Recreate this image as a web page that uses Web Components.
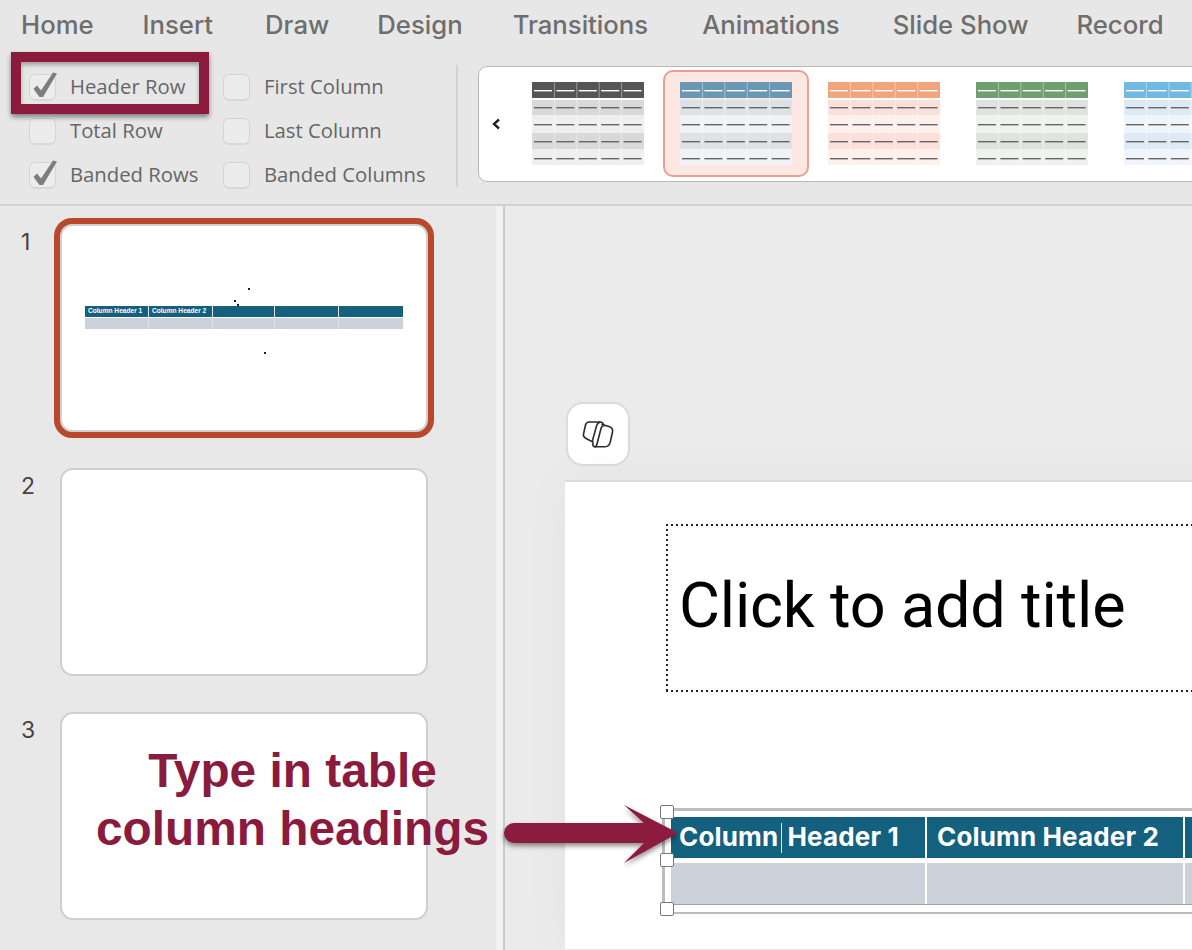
<!DOCTYPE html>
<html><head><meta charset="utf-8"><style>
html,body{margin:0;padding:0;background:#e7e7e7}
</style></head><body>
<app-root></app-root>
<script>
function def(name, css, html, init){
  customElements.define(name, class extends HTMLElement{
    connectedCallback(){
      if(this.shadowRoot) return;
      const r=this.attachShadow({mode:'open'});
      r.innerHTML='<style>'+css+'</style>'+(typeof html==='function'?html(this):html);
      if(init) init(this,r);
    }
  });
}
def('rb-tab',`:host{display:block;font:500 25.700px Inter,Roboto,sans-serif;color:#6e6e6e}`,`<slot></slot>`);
def('rb-check',`:host{display:flex;align-items:center;height:44px;font:400 20.300px "Open Sans",Roboto,sans-serif;color:#666;gap:14px;white-space:nowrap}
.l{position:relative;top:-1px}
.b{width:27px;height:27px;box-sizing:border-box;border:1px solid #d4d4d4;border-bottom:2px solid #d8d8d8;border-radius:6px;background:#ececec;position:relative;flex:none}
svg{position:absolute;left:0;top:-6px}`,
 h=>`<span class="b">${h.hasAttribute('checked')?'<svg width="30" height="32" viewBox="0 0 30 32"><path d="M3.500 20L7 16.500 11 21.500 23 3.500 27 4.500 13 28H9.500z" fill="#7d7d7d"/></svg>':''}</span><span class="l"><slot></slot></span>`);
def('rb-style',`:host{display:block;flex:none;width:146px;height:107px;box-sizing:border-box;margin:3px 1px 0;border:2px solid transparent;border-radius:10px;padding:10px 0 0 15px}
:host([selected]){background:#fce7e3;border-color:#eba08f}
svg{display:block}`,
 h=>{
  const H=h.getAttribute('head'),B=h.getAttribute('band'),L=h.getAttribute('light');
  const ys=[[0,16,H],[18,15,B],[33,18,L],[51,16,B],[67,16,L]];
  let s='';
  ys.forEach(([y,ht,c])=>{s+=`<rect x="0" y="${y}" width="112" height="${ht}" fill="${c}"/>`});
  for(let i=1;i<5;i++) s+=`<rect x="${i*22.4-.5}" y="0" width="1" height="83" fill="#fff" opacity=".4"/>`;
  [8,25,42,59,76].forEach((y,k)=>{for(let i=0;i<5;i++)s+=`<rect x="${i*22.4+2}" y="${y}" width="18" height="1.4" fill="${k?'#666':'#fff'}"/>`});
  return `<svg width="112" height="83" viewBox="0 0 112 83">${s}</svg>`;
 });
def('rb-gallery',`:host{display:flex;width:900px;height:116px;box-sizing:border-box;border:1px solid #b8b8b8;border-radius:9px;background:#fff;flex:none;margin-top:1px}
.c{width:35px;flex:none;display:flex;align-items:center;justify-content:center;padding-right:2px;box-sizing:border-box}
svg{display:block}`,`<div class="c"><svg width="12" height="14" viewBox="0 0 12 14"><path d="M9 2.500L4 7l5 4.500" fill="none" stroke="#222" stroke-width="2.400"/></svg></div><slot></slot>`);
def('rb-ribbon',`:host{display:block;height:206px;box-sizing:border-box;border-bottom:2px solid #d2d2d2;background:#e7e7e7;overflow:hidden}
.t{display:flex;gap:50px;padding:9px 0 0 21px;height:33px}
.o{display:flex;padding:23px 0 0 29px;align-items:flex-start}
.col1{width:194px;flex:none}.col2{width:233px;flex:none}
.sep{width:2px;height:122px;background:#d2d2d2;flex:none;margin-right:20px}`,
`<div class="t"><rb-tab>Home</rb-tab><rb-tab style="margin-left:-1px">Insert</rb-tab><rb-tab style="margin-left:2px">Draw</rb-tab><rb-tab style="margin-left:-2px">Design</rb-tab><rb-tab>Transitions</rb-tab><rb-tab style="margin-left:4px">Animations</rb-tab><rb-tab style="margin-left:3px">Slide Show</rb-tab><rb-tab style="margin-left:-2px">Record</rb-tab></div>
<div class="o"><div class="col1"><rb-check checked>Header Row</rb-check><rb-check>Total Row</rb-check><rb-check checked>Banded Rows</rb-check></div>
<div class="col2"><rb-check>First Column</rb-check><rb-check>Last Column</rb-check><rb-check>Banded Columns</rb-check></div>
<div class="sep"></div>
<rb-gallery>
<rb-style head="#555555" band="#d9d9d9" light="#efefef"></rb-style>
<rb-style selected head="#6a97b3" band="#dee2e6" light="#f0f2f4"></rb-style>
<rb-style head="#f2a57c" band="#fbe0d9" light="#fdf0ed"></rb-style>
<rb-style head="#6f9e70" band="#dfe3df" light="#f0f2f0"></rb-style>
<rb-style head="#72b9e2" band="#dde9f5" light="#f0f5fb"></rb-style>
</rb-gallery></div>`);
def('mini-table',`:host{display:block;margin:80px 23px 0 23px;font:700 6.600px "Liberation Sans",sans-serif;color:#fff}
.r{display:grid;grid-template-columns:63px 64px 62px 64px 1fr;}
.h{height:11px;background:#14607f;line-height:10px;white-space:nowrap}.b{height:11px;background:#cdd1d9;margin-top:1px}
.r>div{border-left:1px solid #dfe3e8;padding-left:3px}.r>div:first-child{border-left:0}`,
`<div class="r h"><div>Column Header 1</div><div>Column Header 2</div><div></div><div></div><div></div></div><div class="r b"><div></div><div></div><div></div><div></div><div></div></div>`);
def('slide-thumb',`:host{display:flex;align-items:flex-start;height:208px}
.n{width:60px;box-sizing:border-box;padding:3px 0 0 21px;font:400 23px Inter,"Liberation Sans",sans-serif;color:#444;line-height:30px}
.s{width:368px;height:208px;box-sizing:border-box;background:#fff;border:2px solid #cfcfcf;border-radius:13px;position:relative;flex:none}
:host([current]) .s{box-shadow:0 0 0 6px #b9472a;border-radius:12px}
::slotted(i){position:absolute;width:1.5px;height:1.5px;background:#222;display:block}`,
 h=>`<div class="n">${h.getAttribute('n')}</div><div class="s"><slot></slot></div>`);
def('slide-panel',`:host{display:flex;flex-direction:column;gap:36px;padding-top:18px;background:#e9e8e9;box-sizing:border-box;overflow:hidden}`,`<slot></slot>`);
def('copilot-btn',`:host{display:flex;width:64px;height:64px;box-sizing:border-box;align-items:center;justify-content:center;background:#fff;border:2px solid #dcdcdc;border-radius:17px}`,
`<svg width="40" height="40" viewBox="0 0 40 40" fill="none" stroke="#2b2b2b" stroke-width="1.600" stroke-linejoin="round" stroke-linecap="round">
<path d="M25.500 10.500C25 9 24 8 22 8H11C9 8 8 9.500 7.500 11L5.500 20C5 22 6 23.500 8 24.500L15 28"/>
<path d="M24 10.500L31 12.500C33.500 13.300 35 15.500 34.500 18L32.500 27C32 30.500 30 32.800 27 32.800H17C15 32.800 14.500 31 15 29"/>
<path d="M22 8.200C20 8.500 19 10 18.500 12L14.500 26.500"/>
<path d="M26.500 11.500C24.500 11.500 23.500 12.500 23 14.500L19 30C18.700 31.500 18 32.500 17 32.800"/></svg>`);
def('data-table',`:host{display:block;position:relative;margin:116px 0 0 106px;height:106px;box-sizing:border-box;border-top:3px solid #bcbcbc;border-bottom:2px solid #bcbcbc;padding-top:6px;font:700 26px Inter,Roboto,sans-serif;letter-spacing:.15px;color:#fff;width:700px}
.r{display:grid;grid-template-columns:254px 258px 1fr}
.r>div{border-left:2px solid #fff;box-sizing:border-box;padding-left:10px}.r>div:first-child{border-left:0;padding-left:8px}
.h{height:41px;background:#14607f;line-height:40px;white-space:nowrap}.b{height:42px;background:#cdd1d9;margin-top:5px;border-bottom:1px solid #9aa0a8;box-sizing:border-box}
.c{display:inline-block;width:1px;height:30px;background:#dfe8ee;vertical-align:middle;margin:0 -1px 2px 3px}
.fr{position:absolute;left:-9px;top:-3px;bottom:-2px;width:9px;box-sizing:border-box;border-left:3px solid #bcbcbc;}
.hd{position:absolute;left:-11px;width:14px;height:14px;box-sizing:border-box;background:#fff;border:1px solid #777;border-radius:2px}`,
`<div class="r h"><div>Column<span class="c"></span> Header 1</div><div>Column Header 2</div><div></div></div>
<div class="r b"><div></div><div></div><div></div></div>
<span class="fr"></span><span class="hd" style="top:-6px"></span><span class="hd" style="top:42px"></span><span class="hd" style="top:91px"></span>`);
def('title-box',`:host{display:flex;align-items:center;box-sizing:border-box;margin:42px 0 0 101px;width:700px;height:168px;padding:0 0 6px 13px;font:400 63px Roboto,sans-serif;color:#000;letter-spacing:-.2px;
background:linear-gradient(90deg,#222 2px,transparent 2px) 0 0/5px 2px repeat-x,linear-gradient(90deg,#222 2px,transparent 2px) 0 100%/5px 2px repeat-x,linear-gradient(#222 2px,transparent 2px) 0 0/2px 5px repeat-y}`,`<slot></slot>`);
def('slide-canvas',`:host{display:block;width:800px;height:469px;background:#fff;border-top:2px solid #dddddd;box-sizing:border-box;box-shadow:0 0 50px rgba(0,0,0,.035)}`,`<slot></slot>`);
def('slide-editor',`:host{display:block;background:#ebebeb;padding:196px 0 0 60px;overflow:hidden;border-left:2px solid #c9c9c9;box-sizing:border-box}
::slotted(copilot-btn){margin:0 0 14px 1px}`,`<slot></slot>`);
def('note-box',`:host{position:absolute;left:11px;top:52px;width:198px;height:62px;box-sizing:border-box;border:10px solid #8b1a3f;box-shadow:0 3px 5px rgba(0,0,0,.45),inset 0 3px 4px rgba(0,0,0,.3)}`,``);
def('note-arrow',`:host{position:absolute;left:500px;top:800px;width:184px;height:70px;display:block}svg{display:block;overflow:visible}`,
`<svg width="184" height="70" viewBox="0 0 184 70"><defs><filter id="f" x="-10%" y="-20%" width="120%" height="150%"><feDropShadow dx="0" dy="3" stdDeviation="2.500" flood-color="#000" flood-opacity=".45"/></filter></defs>
<path filter="url(#f)" fill="#8b1a3f" d="M14 23H144L124 5 178 33 124 63 144 43H14a10 10 0 0 1 0-20z"/></svg>`);
def('note-text',`:host{position:absolute;left:80.500px;top:742px;width:424px;text-align:center;font:700 47.800px/58px "Liberation Sans",sans-serif;color:#8b1a3f;white-space:nowrap}`,`<slot></slot>`);
def('app-root',`:host{display:grid;position:relative;width:1192px;height:950px;overflow:hidden;grid-template-rows:206px 1fr;grid-template-columns:496px 7px 1fr}
rb-ribbon{grid-column:1/-1}.st{background:#f1f1f1}`,
`<rb-ribbon></rb-ribbon>
<slide-panel>
<slide-thumb n="1" current><mini-table></mini-table><i style="left:186px;top:62px"></i><i style="left:172px;top:74px"></i><i style="left:175px;top:78px"></i><i style="left:202px;top:126px"></i></slide-thumb>
<slide-thumb n="2"></slide-thumb>
<slide-thumb n="3"></slide-thumb>
</slide-panel><div class="st"></div>
<slide-editor><copilot-btn></copilot-btn><slide-canvas><title-box>Click to add title</title-box><data-table></data-table></slide-canvas></slide-editor>
<note-box></note-box><note-text>Type in table<br>column headings</note-text><note-arrow></note-arrow>`);
</script>
</body></html>
